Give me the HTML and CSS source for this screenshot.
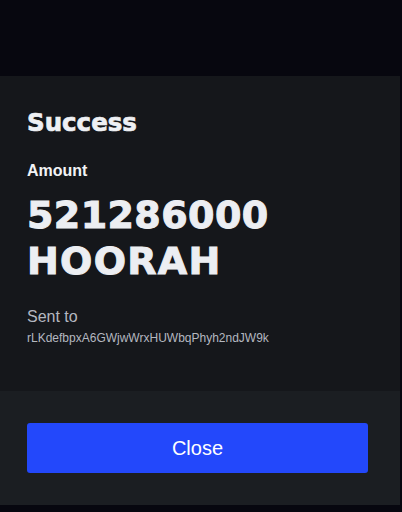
FILE: index.html
```html
<!DOCTYPE html>
<html lang="en">
<head>
<meta charset="utf-8">
<title>Success</title>
<link rel="stylesheet" href="styles.css">
</head>
<body>
<div class="overlay">
  <div class="modal">
    <div class="modal-body">
      <h1 class="title">Success</h1>
      <div class="label">Amount</div>
      <div class="amount"><span class="amount-value">521286000</span><br><span class="amount-unit">HOORAH</span></div>
      <div class="sent-label">Sent to</div>
      <div class="address">rLKdefbpxA6GWjwWrxHUWbqPhyh2ndJW9k</div>
    </div>
    <div class="modal-footer">
      <button class="btn-close" type="button">Close</button>
    </div>
  </div>
</div>
</body>
</html>
```
FILE: styles.css
```css
html, body {
  margin: 0;
  padding: 0;
  background: #07070f;
  height: 100%;
}
body {
  font-family: "Liberation Sans", Arial, sans-serif;
  color: #eceef2;
}
.overlay {
  padding-top: 76px;
}
.modal {
  width: 400px;
  display: flex;
  flex-direction: column;
}
.modal-body {
  background: #15171b;
  height: 315px;
  box-sizing: border-box;
  padding: 32px 27px 0 27px;
}
.title {
  margin: 0;
  font-family: "DejaVu Sans", sans-serif;
  font-weight: 700;
  font-size: 24.5px;
  line-height: 29.4px;
  color: #eef0f4;
  -webkit-text-stroke: 0.7px #eef0f4;
}
.label {
  margin-top: 24px;
  font-weight: 700;
  font-size: 16px;
  line-height: 20px;
  color: #f2f3f6;
}
.amount {
  margin-top: 11px;
  font-family: "DejaVu Sans", sans-serif;
  font-weight: 700;
  font-size: 38px;
  line-height: 46px;
  color: #eceef2;
  -webkit-text-stroke: 1px #eceef2;
}
.amount-value {
  letter-spacing: 0.4px;
}
.amount-unit {
  letter-spacing: 1.3px;
}
.sent-label {
  margin-top: 23px;
  font-size: 16px;
  line-height: 20px;
  color: #b4b8c0;
}
.address {
  margin-top: 3px;
  font-size: 12px;
  line-height: 16px;
  color: #b4b8c0;
}
.modal-footer {
  background: #1b1e22;
  height: 114px;
  box-sizing: border-box;
  padding: 32px 32px 0 27px;
}
.btn-close {
  display: block;
  width: 341px;
  height: 50px;
  border: 0;
  border-radius: 3px;
  background: #2348fb;
  color: #ffffff;
  font-family: "Liberation Sans", Arial, sans-serif;
  font-size: 20px;
  cursor: pointer;
}
```
